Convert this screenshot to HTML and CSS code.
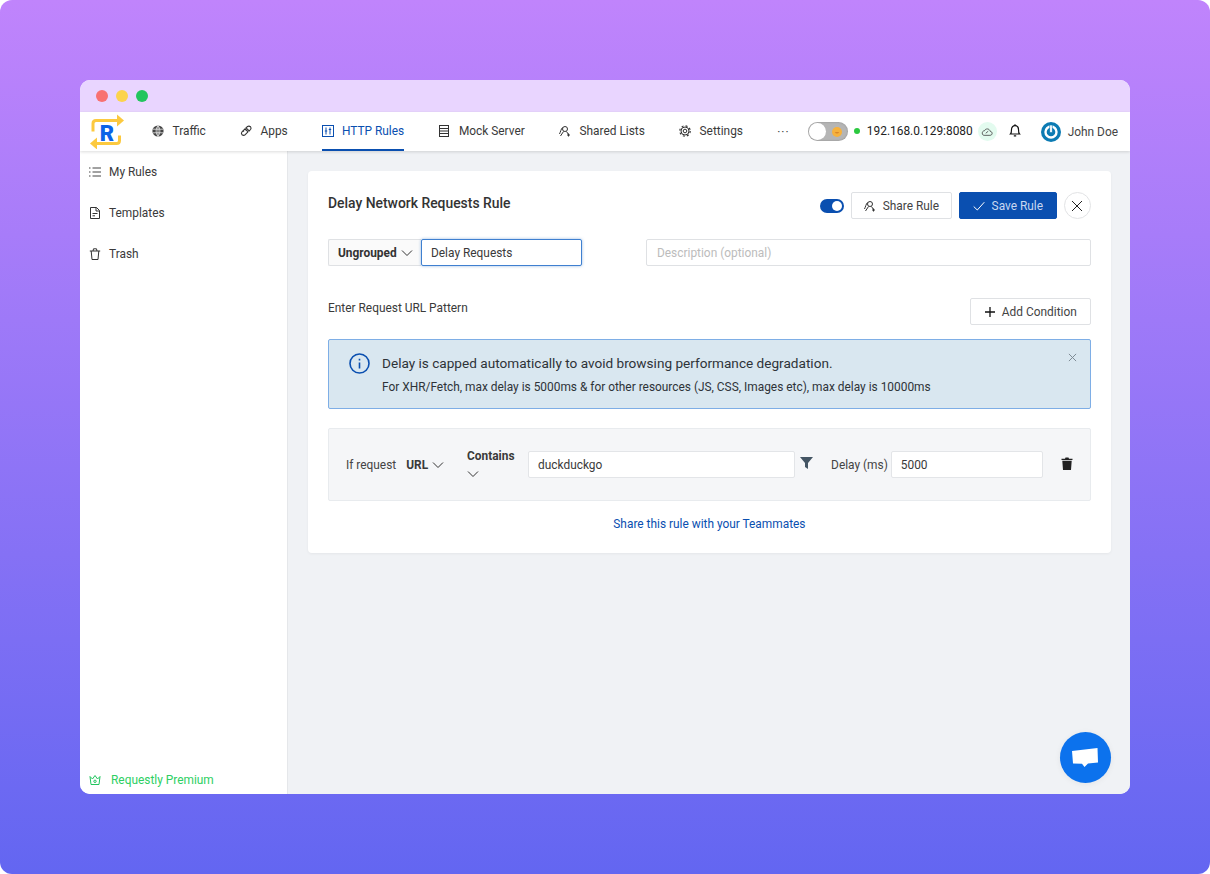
FILE: index.html
```html
<!DOCTYPE html>
<html lang="en">
<head>
    <meta charset="UTF-8">
    <title>Delay Network Requests Rule</title>
    <link rel="stylesheet" href="styles.css">
</head>
<body>

<div class="backdrop">
<div class="window">

    <div class="titlebar">
        <span class="light light-red"></span>
        <span class="light light-yellow"></span>
        <span class="light light-green"></span>
    </div>

    <header class="topbar">
        <svg class="logo" viewBox="0 0 34 34" fill="none">
            <path d="M3 17V9Q3 6 6 6H28" stroke="#fcc93f" stroke-width="3"/>
            <path d="M27 0L34 6L27 12Z" fill="#fcc93f"/>
            <path d="M29.500 21V26Q29.500 29 26.500 29H7" stroke="#fcc93f" stroke-width="3"/>
            <path d="M7 23L0 29L7 35Z" fill="#fcc93f"/>
            <text x="17" y="26" class="logo-letter" text-anchor="middle">R</text>
        </svg>

        <nav class="nav">
            <a class="nav-item">
                <svg class="icon" viewBox="0 0 12 12" fill="none"><circle cx="6" cy="6" r="5.600" fill="#444"/><path d="M6 .7C3.500 3.500 3.500 8.500 6 11.300C8.500 8.500 8.500 3.500 6 .7ZM1 4.200H11M1 7.800H11M6 .7V11.300" stroke="#fff" stroke-width=".7"/></svg>
                Traffic
            </a>
            <a class="nav-item">
                <svg class="icon" viewBox="0 0 12 12" fill="none" stroke="#333" stroke-width="1.100"><path d="M5 3.800L2 6.800Q.8 8 2 9.800Q3.800 11 5 9.800L8 6.800Z"/><path d="M6 2.800L7.500 1.500Q9 .6 10.500 1.700Q11.500 3.200 10.500 4.500L9.200 6Z"/><path d="M3 5.500L4 6.500M5 4L6 5"/></svg>
                Apps
            </a>
            <a class="nav-item nav-active">
                <svg class="icon" viewBox="0 0 12 12" fill="none" stroke="#0a4fb0" stroke-width="1"><rect x=".5" y=".5" width="11" height="11"/><path d="M4 2.500V9.500M8 2.500V9.500M2.800 6H5.200M6.800 4.500H9.200"/></svg>
                HTTP Rules
            </a>
            <a class="nav-item">
                <svg class="icon" viewBox="0 0 12 12" fill="none" stroke="#333" stroke-width="1"><rect x="1.500" y=".5" width="9" height="11"/><path d="M1.500 3.500H10.500M1.500 6H10.500M1.500 8.500H10.500"/></svg>
                Mock Server
            </a>
            <a class="nav-item">
                <svg class="icon" viewBox="0 0 12 12" fill="none" stroke="#333" stroke-width="1"><circle cx="6" cy="4" r="2.500"/><path d="M3.500 2.500C2 4 1.500 7 .5 9M4.500 6.500L1.500 11M7.500 6.500L9.500 9.500M9.500 8.500V11.500M8 10H11"/></svg>
                Shared Lists
            </a>
            <a class="nav-item">
                <svg class="icon" viewBox="0 0 12 12" fill="none" stroke="#333"><circle cx="6" cy="6" r="4" stroke-width="1"/><circle cx="6" cy="6" r="5.200" stroke-width="1.200" stroke-dasharray="2 2.080"/><circle cx="6" cy="6" r="1.800" stroke-width="1"/></svg>
                Settings
            </a>
            <span class="nav-more">···</span>
        </nav>

        <div class="topbar-right">
            <div class="theme-toggle">
                <span class="theme-knob"></span>
                <svg class="theme-sun" viewBox="0 0 11 11"><circle cx="5.500" cy="5.500" r="5.500" fill="#f6b13c"/><path d="M3 5.500Q5.500 9 8 5.500Z" fill="#d9862a"/></svg>
            </div>
            <span class="status-dot"></span>
            <span class="proxy-ip">192.168.0.129:8080</span>
            <span class="cloud">
                <svg viewBox="0 0 14 12" width="12" height="10" fill="none" stroke="#444" stroke-width="1"><path d="M3.500 10H10.500C14 10 14 5.500 10.800 5.200C10 1.500 5 1.500 4 4.500C.5 4.500 .5 10 3.500 10ZM5.500 7.500L8.500 5"/></svg>
            </span>
            <svg class="bell" viewBox="0 0 12 13" fill="none" stroke="#111" stroke-width="1.200"><path d="M1.500 10C2.500 9 2.500 8 2.500 5.500C2.500 3.200 4 1.700 6 1.700C8 1.700 9.500 3.200 9.500 5.500C9.500 8 9.500 9 10.500 10Z"/><path d="M6 .2V1.700M4.800 11.800H7.200" /></svg>
            <svg class="avatar" viewBox="0 0 20 20" fill="none">
                <circle cx="10" cy="10" r="10" fill="#0c7bb3"/>
                <circle cx="10" cy="10" r="5.500" fill="none" stroke="#fff" stroke-width="2.400"/>
                <rect x="8.800" y="3" width="2.400" height="7.500" fill="#fff" stroke="#0c7bb3" stroke-width=".6"/>
            </svg>
            <span class="user-name">John Doe</span>
        </div>
    </header>

    <div class="body-row">
        <aside class="sidebar">
            <a class="side-item">
                <svg class="icon" viewBox="0 0 12 12" fill="none" stroke="#444" stroke-width="1"><path d="M3.500 2H12M3.500 6H12M3.500 10H12M0 2H1.500M0 6H1.500M0 10H1.500"/></svg>
                My Rules
            </a>
            <a class="side-item">
                <svg class="icon" viewBox="0 0 12 12" fill="none" stroke="#333" stroke-width="1"><path d="M1.500 .5H7.500L10.500 3.500V11.500H1.500ZM7 .5V4H10.500M3.500 6.500H8.500M3.500 8.800H6"/></svg>
                Templates
            </a>
            <a class="side-item">
                <svg class="icon" viewBox="0 0 12 12" fill="none" stroke="#333" stroke-width="1"><path d="M.8 3H11.200M2.200 3L3 11.500H9L9.800 3M4 3L4.500 .8H7.500L8 3"/></svg>
                Trash
            </a>
            <a class="premium">
                <svg class="icon" viewBox="0 0 12 12" fill="none" stroke="#22c55e" stroke-width="1"><path d="M1 2.500L3.500 5L6 1.500L8.500 5L11 2.500L10 10.500H2Z"/><circle cx="6" cy="7.300" r="1.200"/></svg>
                Requestly Premium
            </a>
        </aside>

        <main class="main">
            <section class="card">
                <div class="card-head">
                    <h1 class="rule-title">Delay Network Requests Rule</h1>
                    <div class="card-actions">
                        <span class="rule-switch"><span class="rule-switch-knob"></span></span>
                        <button class="btn btn-share">
                            <svg class="icon" viewBox="0 0 12 12" fill="none" stroke="#333" stroke-width="1"><circle cx="6" cy="4" r="2.500"/><path d="M3.500 2.500C2 4 1.500 7 .5 9M4.500 6.500L1.500 11M7.500 6.500L9.500 9.500M9.500 8.500V11.500M8 10H11"/></svg>
                            Share Rule
                        </button>
                        <button class="btn btn-primary">
                            <svg class="icon" viewBox="0 0 12 12" fill="none" stroke="#fff" stroke-width="1"><path d="M.7 6.500L4.300 10L11.300 2.200"/></svg>
                            Save Rule
                        </button>
                        <button class="btn-close">
                            <svg viewBox="0 0 12 12" width="12" height="12" fill="none" stroke="#222" stroke-width="1"><path d="M1 1L11 11M11 1L1 11"/></svg>
                        </button>
                    </div>
                </div>

                <div class="name-row">
                    <div class="group-select">
                        Ungrouped
                        <svg class="chevron" viewBox="0 0 12 8" fill="none" stroke="#333" stroke-width="1"><path d="M1 1.500L6 6.500L11 1.500"/></svg>
                    </div>
                    <input class="name-input" value="Delay Requests">
                    <input class="desc-input" placeholder="Description (optional)">
                </div>

                <div class="pattern-row">
                    <span class="pattern-label">Enter Request URL Pattern</span>
                    <button class="btn btn-add">
                        <svg class="icon" viewBox="0 0 12 12" fill="none" stroke="#111" stroke-width="1.300"><path d="M6 1V11M1 6H11"/></svg>
                        Add Condition
                    </button>
                </div>

                <div class="alert">
                    <svg class="alert-icon" viewBox="0 0 21 21" fill="none" stroke="#0a4fb0" stroke-width="1.600">
                        <circle cx="10.500" cy="10.500" r="9.500"/>
                        <path d="M10.500 9.500V15.500M10.500 5.800V7.500"/>
                    </svg>
                    <div class="alert-text">
                        <div class="alert-title">Delay is capped automatically to avoid browsing performance degradation.</div>
                        <div class="alert-desc">For XHR/Fetch, max delay is 5000ms &amp; for other resources (JS, CSS, Images etc), max delay is 10000ms</div>
                    </div>
                    <svg class="alert-close" viewBox="0 0 10 10" fill="none" stroke="#7d8a94" stroke-width="1.100"><path d="M1 1L9 9M9 1L1 9"/></svg>
                </div>

                <div class="condition">
                    <span class="cond-label">If request</span>
                    <span class="cond-url">URL
                        <svg class="chevron" viewBox="0 0 12 8" fill="none" stroke="#333" stroke-width="1"><path d="M1 1.500L6 6.500L11 1.500"/></svg>
                    </span>
                    <span class="cond-op">Contains
                        <svg class="chevron" viewBox="0 0 12 8" fill="none" stroke="#333" stroke-width="1"><path d="M1 1.500L6 6.500L11 1.500"/></svg>
                    </span>
                    <input class="cond-input url-input" value="duckduckgo">
                    <svg class="filter" viewBox="0 0 13 12"><path d="M0 0H13L8 6V12L5 10V6Z" fill="#445564"/></svg>
                    <span class="cond-delay">Delay (ms)</span>
                    <input class="cond-input delay-input" value="5000">
                    <svg class="trash" viewBox="0 0 12 13"><path d="M0.500 1.700H4L4.500 .5H7.500L8 1.700H11.500V3H.5ZM1.300 3.800H10.700L10 13H2Z" fill="#222"/></svg>
                </div>

                <a class="share-link">Share this rule with your Teammates</a>
            </section>

            <div class="chat">
                <svg viewBox="0 0 26 20" width="26" height="20"><path d="M0 3L25.500 0L26 14.500L16 15.500L12.500 19L10 15.800L1 15.500Z" fill="#fff"/></svg>
            </div>
        </main>
    </div>
</div>
</div>

</body>
</html>
```

FILE: styles.css
```css
* {
    box-sizing: border-box;
}

html, body {
    margin: 0;
    height: 100%;
    background-color: white;
}

body {
    font-family: Roboto, "Liberation Sans", sans-serif;
    font-size: 11.9px;
    color: #3a3a3a;
    overflow: hidden;
}

.backdrop {
    height: 874px;
    padding: 80px;
    border-radius: 12px;
    background: linear-gradient(180deg, #c084fc, #6366f1);
}

.window {
    height: 714px;
    border-radius: 10px;
    overflow: hidden;
    display: flex;
    flex-direction: column;
    background-color: white;
}

.titlebar {
    flex: 0 0 32px;
    display: flex;
    align-items: center;
    gap: 8px;
    padding-left: 16px;
    background-color: #e9d5ff;
}

.light {
    width: 12px;
    height: 12px;
    border-radius: 50%;
}
.light-red { background-color: #f87171; }
.light-yellow { background-color: #fcd34d; }
.light-green { background-color: #22c55e; }

.icon {
    width: 12px;
    height: 12px;
    flex: none;
}

.chevron {
    width: 12px;
    height: 8px;
    flex: none;
}

/* top bar */
.topbar {
    flex: 0 0 39px;
    display: flex;
    align-items: center;
    padding: 0 12px 0 10px;
    background-color: white;
    box-shadow: 0 1px 3px rgba(0, 0, 0, 0.14);
    position: relative;
    z-index: 1;
}

.logo {
    width: 34px;
    height: 35px;
    flex: none;
}

.logo-letter {
    font-family: Roboto, sans-serif;
    font-size: 22px;
    font-weight: 900;
    fill: #0c63e7;
}

.nav {
    display: flex;
    align-items: stretch;
    gap: 34.2px;
    height: 39px;
    margin-left: 28px;
}

.nav-item {
    display: flex;
    align-items: center;
    gap: 8.5px;
    color: #3a3a3a;
    white-space: nowrap;
    border-bottom: 2px solid transparent;
    border-top: 1px solid transparent;
}

.nav-active {
    color: #0a4fb0;
    border-bottom-color: #0a4fb0;
    gap: 8px;
}

.nav-more {
    display: flex;
    align-items: center;
    color: #444;
    letter-spacing: 1px;
}

.topbar-right {
    margin-left: auto;
    display: flex;
    align-items: center;
}

.theme-toggle {
    width: 40px;
    height: 19px;
    border-radius: 10px;
    background-color: #b5b5b5;
    display: flex;
    align-items: center;
    justify-content: space-between;
    padding: 0 6px 0 1px;
    box-shadow: inset 0 0 2px rgba(0, 0, 0, 0.25);
}

.theme-knob {
    width: 17px;
    height: 17px;
    border-radius: 50%;
    background-color: white;
}

.theme-sun {
    width: 10px;
    height: 10px;
}

.status-dot {
    width: 6px;
    height: 6px;
    border-radius: 50%;
    background-color: #2bc93f;
    margin-left: 6px;
    margin-bottom: 2px;
}

.proxy-ip {
    margin-left: 7px;
    margin-bottom: 2px;
    color: #222;
    white-space: nowrap;
}

.cloud {
    width: 19px;
    height: 19px;
    margin-left: 5px;
    border-radius: 50%;
    background-color: #e3fbef;
    display: flex;
    align-items: center;
    justify-content: center;
}

.bell {
    width: 12px;
    height: 13px;
    margin-left: 12px;
    margin-bottom: 2px;
}

.avatar {
    width: 20px;
    height: 20px;
    margin-left: 20px;
}

.user-name {
    margin-left: 7px;
    color: #444;
    white-space: nowrap;
}

/* sidebar + content */
.body-row {
    flex: 1;
    display: flex;
    min-height: 0;
}

.sidebar {
    flex: 0 0 208px;
    display: flex;
    flex-direction: column;
    padding: 14px 0 0 9px;
    border-right: 1px solid #e5e7ea;
    background-color: white;
}

.side-item {
    display: flex;
    align-items: center;
    gap: 8px;
    height: 14px;
    margin-bottom: 27px;
    color: #3a3a3a;
}

.premium {
    margin-top: auto;
    margin-bottom: 7px;
    display: flex;
    align-items: center;
    gap: 10px;
    color: #2ecf63;
}

.main {
    flex: 1;
    padding: 20px 20px 0 20px;
    background-color: #f0f2f5;
    position: relative;
}

.card {
    height: 382px;
    padding: 21px 20px 0;
    border-radius: 4px;
    background-color: white;
    box-shadow: 0 1px 3px rgba(0, 0, 0, 0.05);
}

.card-head {
    display: flex;
    align-items: flex-start;
    justify-content: space-between;
}

.rule-title {
    margin: 3px 0 0;
    font-size: 13.9px;
    line-height: 16px;
    font-weight: 500;
    color: #333;
}

.card-actions {
    display: flex;
    align-items: center;
    gap: 7px;
}

.rule-switch {
    width: 24px;
    height: 14px;
    border-radius: 7px;
    background-color: #0a4fb0;
    display: flex;
    align-items: center;
    justify-content: flex-end;
    padding-right: 2px;
}

.rule-switch-knob {
    width: 10px;
    height: 10px;
    border-radius: 50%;
    background-color: white;
}

.btn {
    height: 27px;
    display: flex;
    align-items: center;
    justify-content: center;
    gap: 7px;
    padding: 0;
    font-family: inherit;
    font-size: inherit;
    color: #444;
    background-color: white;
    border: 1px solid #dfe1e4;
    border-radius: 2px;
}

.btn-share {
    width: 101px;
}

.btn-primary {
    width: 98px;
    color: #c9d8f0;
    background-color: #0a4fb0;
    border-color: #0a4fb0;
}

.btn-close {
    width: 27px;
    height: 27px;
    display: flex;
    align-items: center;
    justify-content: center;
    padding: 0;
    background-color: white;
    border: 1px solid #e2e3e5;
    border-radius: 50%;
}

.name-row {
    display: flex;
    align-items: stretch;
    height: 27px;
    margin-top: 20px;
}

.group-select {
    width: 93px;
    display: flex;
    align-items: center;
    gap: 4px;
    padding-left: 9px;
    font-weight: 700;
    color: #333;
    background-color: #fafafa;
    border: 1px solid #dfe1e4;
    border-right: none;
    border-radius: 2px 0 0 2px;
}

input {
    font-family: inherit;
    font-size: inherit;
    color: #3a3a3a;
    outline: none;
    background-color: white;
    border-radius: 2px;
}

.name-input {
    width: 161px;
    padding: 0 9px;
    border: 1px solid #3f80d0;
    box-shadow: 0 0 3px rgba(42, 111, 196, 0.5);
}

.desc-input {
    margin-left: 64px;
    flex: 1;
    padding: 0 10px;
    border: 1px solid #dfe1e4;
}

.desc-input::placeholder {
    color: #bcbcbc;
}

.pattern-row {
    display: flex;
    align-items: flex-start;
    justify-content: space-between;
    margin-top: 32px;
}

.pattern-label {
    margin-top: 3px;
    line-height: 14px;
}

.btn-add {
    width: 121px;
    gap: 6px;
}

.alert {
    display: flex;
    align-items: flex-start;
    height: 70px;
    margin-top: 14px;
    padding: 13px 0 0 20px;
    background-color: #d9e7f0;
    border: 1px solid #7eaee6;
    border-radius: 2px;
}

.alert-icon {
    width: 21px;
    height: 21px;
    flex: none;
}

.alert-text {
    margin-left: 12px;
    flex: 1;
}

.alert-title {
    font-size: 13.6px;
    line-height: 20px;
    color: #2e3338;
}

.alert-desc {
    margin-top: 6px;
    line-height: 16px;
    color: #2e3338;
}

.alert-close {
    width: 9px;
    height: 9px;
    flex: none;
    margin: 0 13px 0 0;
}

.condition {
    display: flex;
    align-items: center;
    height: 73px;
    margin-top: 19px;
    padding: 0 17px;
    background-color: #f5f6f8;
    border: 1px solid #e8ebee;
    border-radius: 2px;
}

.cond-label {
    color: #444;
    white-space: nowrap;
}

.cond-url {
    margin-left: 10px;
    display: flex;
    align-items: center;
    gap: 4px;
    font-weight: 700;
}

.cond-op {
    width: 61px;
    margin-left: 23px;
    margin-bottom: 4px;
    font-weight: 700;
    line-height: 18px;
}

.cond-op .chevron {
    display: block;
    margin-top: 5px;
}

.cond-input {
    height: 27px;
    padding: 0 9px;
    border: 1px solid #e3e5e8;
}

.url-input {
    width: 267px;
}

.filter {
    width: 13px;
    height: 12px;
    margin: -3px 0 0 5px;
    flex: none;
}

.cond-delay {
    margin-left: 18px;
    color: #444;
    white-space: nowrap;
}

.delay-input {
    width: 152px;
    margin-left: 3px;
}

.trash {
    width: 12px;
    height: 13px;
    margin: -3px 0 0 18px;
    flex: none;
}

.share-link {
    display: block;
    margin-top: 15px;
    line-height: 16px;
    text-align: center;
    color: #0a4fb0;
}

.chat {
    position: absolute;
    right: 20px;
    bottom: 11px;
    width: 51px;
    height: 51px;
    border-radius: 50%;
    background-color: #0c72ed;
    display: flex;
    align-items: center;
    justify-content: center;
    box-shadow: 0 1px 6px rgba(0, 0, 0, 0.06);
}
```
